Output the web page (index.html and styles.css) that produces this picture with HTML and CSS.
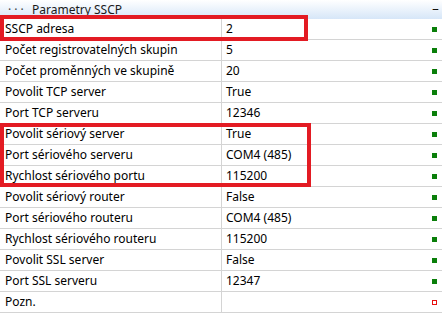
FILE: index.html
```html
<!DOCTYPE html>
<html lang="cs">
<head>
    <meta charset="UTF-8">
    <title>Parametry SSCP</title>
    <link rel="stylesheet" href="styles.css">
</head>
<body>
    <div class="grid">
        <div class="header">
            <span class="dots">&middot;&middot;&middot;</span>
            <span class="title">Parametry SSCP</span>
            <span class="collapse"></span>
        </div>

        <div class="row"><div class="name">SSCP adresa</div><div class="value">2</div><div class="state"><span class="ok"></span></div></div>
        <div class="row"><div class="name">Počet registrovatelných skupin</div><div class="value">5</div><div class="state"><span class="ok"></span></div></div>
        <div class="row"><div class="name">Počet proměnných ve skupině</div><div class="value">20</div><div class="state"><span class="ok"></span></div></div>
        <div class="row"><div class="name">Povolit TCP server</div><div class="value">True</div><div class="state"><span class="ok"></span></div></div>
        <div class="row"><div class="name">Port TCP serveru</div><div class="value">12346</div><div class="state"><span class="ok"></span></div></div>
        <div class="row"><div class="name">Povolit sériový server</div><div class="value">True</div><div class="state"><span class="ok"></span></div></div>
        <div class="row"><div class="name">Port sériového serveru</div><div class="value">COM4 (485)</div><div class="state"><span class="ok"></span></div></div>
        <div class="row"><div class="name">Rychlost sériového portu</div><div class="value">115200</div><div class="state"><span class="ok"></span></div></div>
        <div class="row"><div class="name">Povolit sériový router</div><div class="value">False</div><div class="state"><span class="ok"></span></div></div>
        <div class="row"><div class="name">Port sériového routeru</div><div class="value">COM4 (485)</div><div class="state"><span class="ok"></span></div></div>
        <div class="row"><div class="name">Rychlost sériového routeru</div><div class="value">115200</div><div class="state"><span class="ok"></span></div></div>
        <div class="row"><div class="name">Povolit SSL server</div><div class="value">False</div><div class="state"><span class="ok"></span></div></div>
        <div class="row"><div class="name">Port SSL serveru</div><div class="value">12347</div><div class="state"><span class="ok"></span></div></div>
        <div class="row"><div class="name">Pozn.</div><div class="value"></div><div class="state"><span class="empty"></span></div></div>

        <!-- zvýraznění -->
        <div class="mark mark-address"></div>
        <div class="mark mark-serial"></div>
    </div>
</body>
</html>
```

FILE: styles.css
```css
body {
    margin: 0;
    background: #ffffff;
    font-family: "Noto Sans", "Open Sans", sans-serif;
    font-size: 12px;
    color: #000;
}
.grid {
    position: relative;
    width: 442px;
}
.header {
    height: 19px;
    display: flex;
    align-items: center;
    background: linear-gradient(to bottom, #ffffff, #d6e6f8);
}
.dots {
    width: 32px;
    padding-left: 8px;
    box-sizing: border-box;
    color: #444;
    letter-spacing: 3px;
    line-height: 12px;
}
.title {
    flex: 1;
    color: #1a1a1a;
}
.collapse {
    width: 5px;
    height: 1px;
    margin-right: 4px;
    background: #111;
    box-shadow: -1px 0 0 #e8a040, 1px 0 0 #7aaee0;
}
.row {
    display: flex;
    height: 20px;
    border-bottom: 1px solid #d4d4d4;
    line-height: 20px;
}
.name {
    width: 216px;
    padding-left: 5px;
    border-right: 1px solid #d4d4d4;
    white-space: nowrap;
}
.value {
    flex: 1;
    padding-left: 4px;
}
.state {
    width: 14px;
    padding-left: 4px;
    box-sizing: border-box;
    display: flex;
    align-items: center;
}
.ok {
    width: 5px;
    height: 5px;
    background: #0a7f0a;
}
.empty {
    width: 3px;
    height: 3px;
    border: 1px solid #e81010;
}
.mark {
    position: absolute;
    left: 0;
    border: 4px solid #e31b23;
    box-sizing: border-box;
}
.mark-address {
    top: 15px;
    width: 308px;
    height: 26px;
}
.mark-serial {
    top: 123px;
    width: 311px;
    height: 64px;
}
```
